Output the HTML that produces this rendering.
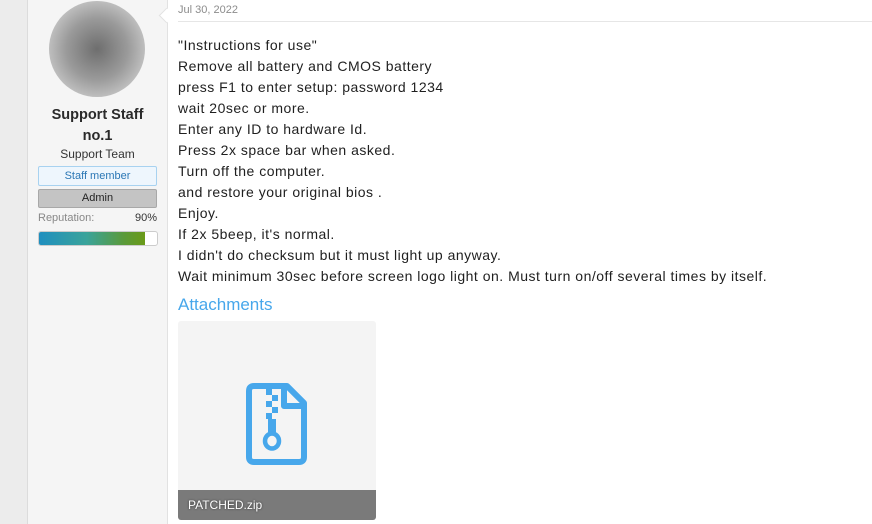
<!DOCTYPE html>
<html><head><style>
body{margin:0;width:872px;height:524px;overflow:hidden;background:#fff;font-family:"Liberation Sans",sans-serif;position:relative}
.strip{position:absolute;left:0;top:0;width:27px;height:524px;background:#ececec;border-right:1px solid #dcdcdc}
.side{position:absolute;left:28px;top:0;width:139px;height:524px;background:#f5f5f5;border-right:1px solid #e2e2e2}
.av{position:absolute;left:49px;top:1px;width:96px;height:96px;border-radius:50%;background:radial-gradient(circle,#6e6e6e 0%,#9a9a9a 45%,#d2d2d2 85%,#e0e0e0 100%)}
.name{position:absolute;left:28px;width:139px;top:105px;text-align:center;font-weight:bold;font-size:14.5px;color:#2a2a2a;line-height:21px}
.team{position:absolute;left:28px;width:139px;top:147px;text-align:center;font-size:12px;color:#333}
.b1{position:absolute;left:38px;top:166px;width:117px;height:18px;border:1px solid #a8d2f0;background:#eef6fd;color:#2b77b5;font-size:11px;text-align:center;line-height:18px;border-radius:2px}
.b2{position:absolute;left:38px;top:189px;width:117px;height:17px;border:1px solid #a8a8a8;background:#c4c4c4;color:#222;font-size:11px;text-align:center;line-height:17px;border-radius:2px}
.rep{position:absolute;left:38px;top:212px;width:119px;font-size:11px;color:#888}
.rep span{float:right;color:#333}
.bar{position:absolute;left:38px;top:231px;width:118px;height:13px;border:1px solid #ccc;border-radius:3px;background:#fff;overflow:hidden}
.bar div{width:106px;height:13px;background:linear-gradient(90deg,#1f8fbf,#3aa39a 45%,#5a9a3a 80%,#6a9a18)}
.arrow{position:absolute;left:161px;top:10px;width:10px;height:10px;background:#fff;transform:rotate(45deg);border-left:1px solid #e2e2e2;border-bottom:1px solid #e2e2e2}
.date{position:absolute;left:178px;top:4px;font-size:11px;color:#8c8c8c}
.hr{position:absolute;left:178px;right:0;top:21px;height:1px;background:#e6e6e6}
.txt{position:absolute;left:178px;top:35px;font-size:14px;letter-spacing:0.5px;line-height:21px;color:#1f1f1f;white-space:pre}
.att{position:absolute;left:178px;top:295px;font-size:17px;color:#47a7eb}
.box{position:absolute;left:178px;top:321px;width:198px;height:199px;background:#f4f4f4;border-radius:3px;overflow:hidden}
.cap{position:absolute;left:0;bottom:0;width:100%;height:30px;background:#7a7a7a;color:#fff;font-size:12px;line-height:30px;padding-left:10px;box-sizing:border-box;text-shadow:0 0 2px #333}
</style></head><body>
<div class="strip"></div><div class="side"></div>
<div class="av"></div>
<div class="name">Support Staff<br>no.1</div>
<div class="team">Support Team</div>
<div class="b1">Staff member</div>
<div class="b2">Admin</div>
<div class="rep">Reputation:<span>90%</span></div>
<div class="bar"><div></div></div>
<div class="arrow"></div>
<div class="date">Jul 30, 2022</div>
<div class="hr"></div>
<div class="txt">"Instructions for use"
Remove all battery and CMOS battery
press F1 to enter setup: password 1234
wait 20sec or more.
Enter any ID to hardware Id.
Press 2x space bar when asked.
Turn off the computer.
and restore your original bios .
Enjoy.
If 2x 5beep, it's normal.
I didn't do checksum but it must light up anyway.
Wait minimum 30sec before screen logo light on. Must turn on/off several times by itself.</div>
<div class="att">Attachments</div>
<div class="box">
<svg style="position:absolute;left:68px;top:62px" width="62" height="82" viewBox="0 0 62 82">
<path d="M8 3H41L58 20V74Q58 79 53 79H8Q3 79 3 74V8Q3 3 8 3Z" fill="none" stroke="#47a7eb" stroke-width="6" stroke-linejoin="round"/>
<path d="M38 3V23H58" fill="none" stroke="#47a7eb" stroke-width="6" stroke-linejoin="round"/>
<g fill="#47a7eb"><rect x="20" y="6" width="6" height="6"/><rect x="26" y="12" width="6" height="6"/><rect x="20" y="18" width="6" height="6"/><rect x="26" y="24" width="6" height="6"/><rect x="20" y="30" width="6" height="6"/><rect x="22" y="36" width="8" height="16"/></g>
<ellipse cx="26" cy="58" rx="7" ry="7.5" fill="none" stroke="#47a7eb" stroke-width="4.5"/>
</svg>
<div class="cap">PATCHED.zip</div>
</div>
</body></html>
